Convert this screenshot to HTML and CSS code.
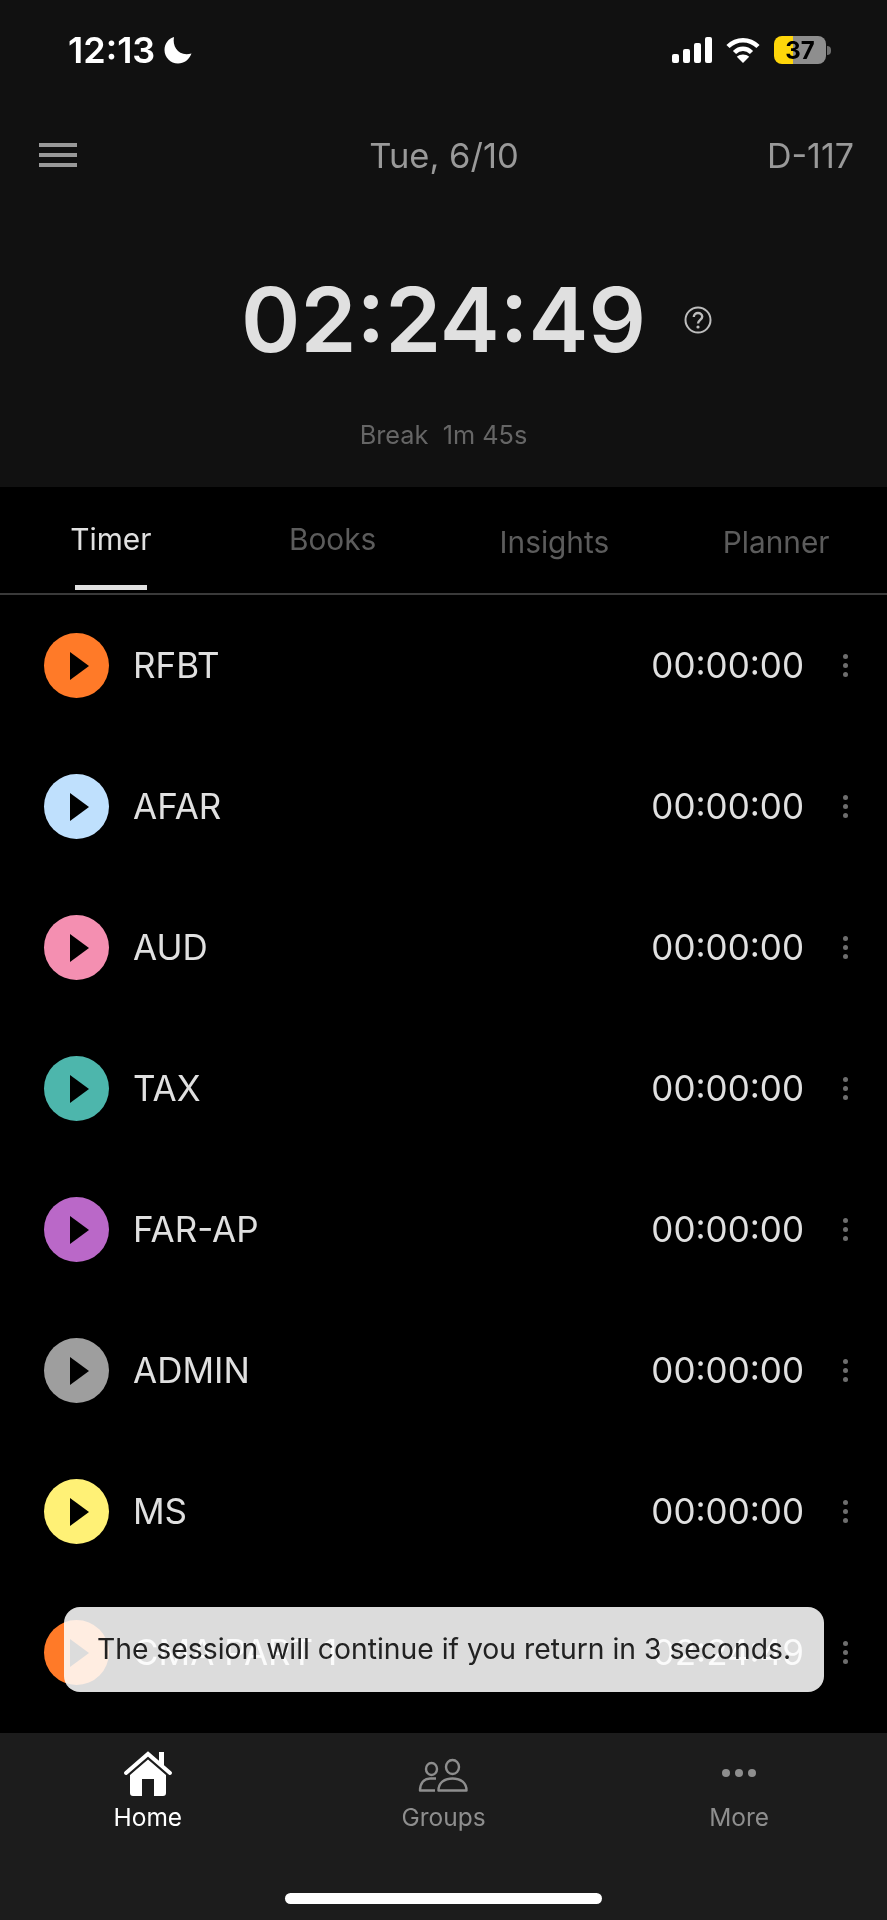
FILE: index.html
```html
<!DOCTYPE html>

<html>

<head>
  <meta charset="utf-8">
  <link rel="stylesheet" href="styles.css">
</head>

<body>

  <div class="app">

    <section class="top">
      <div class="status">
        <div class="status-left">
          <span class="status-time">12:13</span>
          <svg class="moon" width="28" height="28" viewBox="0 0 28 28"><path fill="#fff" d="M10 1C8 11 15 21 27.500 17.500C25 24 20 27.500 14 27.500C6.500 27.500 0.500 21.500 0.500 14C0.500 7.500 4.500 2.500 10 1Z"/></svg>
        </div>
        <div class="status-right">
          <svg width="40" height="26" viewBox="0 0 40 26"><rect x="0" y="17" width="7" height="9" rx="2" fill="#fff"/><rect x="11" y="12" width="7" height="14" rx="2" fill="#fff"/><rect x="22" y="6" width="7" height="20" rx="2" fill="#fff"/><rect x="33" y="0" width="7" height="26" rx="2" fill="#fff"/></svg>
          <svg class="wifi" width="34" height="26" viewBox="0 0 34 26"><path fill="none" stroke="#fff" stroke-width="4.500" d="M2 9.500C10.500 1 23.500 1 32 9.500"/><path fill="none" stroke="#fff" stroke-width="4.500" d="M8.500 15.500C13.500 10.500 20.500 10.500 25.500 15.500"/><path fill="#fff" d="M17 26L10.800 19.800C14.500 16.600 19.500 16.600 23.200 19.800Z"/></svg>
          <div class="battery">
            <div class="battery-body"><span class="battery-level">37</span></div>
            <div class="battery-nub"></div>
          </div>
        </div>
      </div>

      <div class="header">
        <div class="menu"><span></span><span></span><span></span></div>
        <div class="date">Tue, 6/10</div>
        <div class="dday">D-117</div>
      </div>

      <div class="clock">
        <div class="clock-time">02:24:49</div>
        <svg class="help" width="28" height="28" viewBox="0 0 28 28"><circle cx="14" cy="14" r="12.500" fill="none" stroke="#bdbdbd" stroke-width="2"/><path fill="none" stroke="#bdbdbd" stroke-width="2.400" d="M9.800 11C9.800 8.600 11.700 7 14 7C16.400 7 18.200 8.600 18.200 10.800C18.200 13.800 14 14 14 17.500"/><circle cx="14" cy="21" r="1.600" fill="#bdbdbd"/></svg>
      </div>

      <div class="break">Break&nbsp; 1m 45s</div>
    </section>

    <nav class="tabs">
      <div class="tab tab-active">Timer</div>
      <div class="tab">Books</div>
      <div class="tab tab-low">Insights</div>
      <div class="tab tab-low">Planner</div>
    </nav>

    <div class="list">
      <div class="row">
        <div class="play orange"><svg width="19" height="28" viewBox="0 0 19 28"><path d="M0 0L19 14L0 28Z"/></svg></div>
        <div class="name">RFBT</div>
        <div class="time">00:00:00</div>
        <div class="more"><i></i><i></i><i></i></div>
      </div>
      <div class="row">
        <div class="play blue"><svg width="19" height="28" viewBox="0 0 19 28"><path d="M0 0L19 14L0 28Z"/></svg></div>
        <div class="name">AFAR</div>
        <div class="time">00:00:00</div>
        <div class="more"><i></i><i></i><i></i></div>
      </div>
      <div class="row">
        <div class="play pink"><svg width="19" height="28" viewBox="0 0 19 28"><path d="M0 0L19 14L0 28Z"/></svg></div>
        <div class="name">AUD</div>
        <div class="time">00:00:00</div>
        <div class="more"><i></i><i></i><i></i></div>
      </div>
      <div class="row">
        <div class="play teal"><svg width="19" height="28" viewBox="0 0 19 28"><path d="M0 0L19 14L0 28Z"/></svg></div>
        <div class="name">TAX</div>
        <div class="time">00:00:00</div>
        <div class="more"><i></i><i></i><i></i></div>
      </div>
      <div class="row">
        <div class="play purple"><svg width="19" height="28" viewBox="0 0 19 28"><path d="M0 0L19 14L0 28Z"/></svg></div>
        <div class="name">FAR-AP</div>
        <div class="time">00:00:00</div>
        <div class="more"><i></i><i></i><i></i></div>
      </div>
      <div class="row">
        <div class="play grey"><svg width="19" height="28" viewBox="0 0 19 28"><path d="M0 0L19 14L0 28Z"/></svg></div>
        <div class="name">ADMIN</div>
        <div class="time">00:00:00</div>
        <div class="more"><i></i><i></i><i></i></div>
      </div>
      <div class="row">
        <div class="play yellow"><svg width="19" height="28" viewBox="0 0 19 28"><path d="M0 0L19 14L0 28Z"/></svg></div>
        <div class="name">MS</div>
        <div class="time">00:00:00</div>
        <div class="more"><i></i><i></i><i></i></div>
      </div>
      <div class="row">
        <div class="play orange"><svg width="19" height="28" viewBox="0 0 19 28"><path d="M0 0L19 14L0 28Z"/></svg></div>
        <div class="name">CMA PART 1</div>
        <div class="time">02:24:49</div>
        <div class="more"><i></i><i></i><i></i></div>
      </div>
    </div>

    <!-- Lies over the last row, the grey layer is screened on what is under it. -->
    <div class="toast"><span class="toast-text">The session will continue if you return in 3 seconds.</span></div>

    <footer class="bottom">
      <div class="bottom-tabs">
        <div class="bottom-tab bottom-active">
          <svg width="50" height="46" viewBox="0 0 50 46"><path fill="none" stroke="#fff" stroke-width="4" stroke-linecap="round" d="M3 22L25 3L47 22"/><rect x="36" y="1" width="5" height="13" fill="#fff"/><path fill="#fff" d="M25 8.500L43 24V42C43 44 42 45 40 45H31V28H19V45H10C8 45 7 44 7 42V24Z"/></svg>
          <span>Home</span>
        </div>
        <div class="bottom-tab">
          <svg width="50" height="46" viewBox="0 0 50 46"><g fill="none" stroke="#8e8e8e" stroke-width="2.400" stroke-linejoin="round"><ellipse cx="13.500" cy="18" rx="5.500" ry="6"/><ellipse cx="34.500" cy="16" rx="6.500" ry="7"/><path d="M18 27.500H12C6 27.500 2 32 2 39.500H17"/><path d="M20.500 39.500C20.500 32 26 27.500 34.500 27.500C43 27.500 48.500 32 48.500 39.500Z"/></g></svg>
          <span>Groups</span>
        </div>
        <div class="bottom-tab">
          <svg width="50" height="46" viewBox="0 0 50 46"><circle cx="12" cy="22" r="4" fill="#8e8e8e"/><circle cx="25" cy="22" r="4" fill="#8e8e8e"/><circle cx="38" cy="22" r="4" fill="#8e8e8e"/></svg>
          <span>More</span>
        </div>
      </div>
      <div class="home-bar"></div>
    </footer>

  </div>

</body>

</html>
```

FILE: styles.css
```css
html,
body {
  margin: 0;
  background: #000;
}

.app {
  position: relative;
  width: 887px;
  height: 1920px;
  display: flex;
  flex-direction: column;
  overflow: hidden;
  background: #000;
  font-family: Inter, "Liberation Sans", sans-serif;
}

/* Dark block at the top: status bar, date row, big clock */
.top {
  height: 487px;
  background: #111;
  display: flex;
  flex-direction: column;
}

.status {
  height: 100px;
  padding: 0 56px 0 68px;
  display: flex;
  justify-content: space-between;
  align-items: center;
}

.status-left,
.status-right {
  display: flex;
  align-items: center;
}

.status-time {
  color: #fff;
  font-size: 36px;
  font-weight: 600;
}

.moon {
  margin-left: 9px;
}

.wifi {
  margin-left: 14px;
}

.battery {
  margin-left: 14px;
  display: flex;
  align-items: center;
}

.battery-body {
  width: 52px;
  height: 28px;
  border-radius: 8px;
  background: linear-gradient(to right, #ffd60a 19px, #8e8e8e 19px);
  display: flex;
  align-items: center;
  justify-content: center;
}

.battery-level {
  color: #000;
  font-size: 24px;
  font-weight: 700;
}

.battery-nub {
  width: 4px;
  height: 9px;
  margin-left: 1px;
  border-radius: 0 4px 4px 0;
  background: #6e6e6e;
}

.header {
  height: 110px;
  padding: 0 33px 0 39px;
  display: grid;
  grid-template-columns: 1fr auto 1fr;
  align-items: center;
}

.menu {
  display: flex;
  flex-direction: column;
  gap: 6px;
  width: 38px;
}

.menu span {
  height: 4px;
  background: #999;
}

.date,
.dday {
  color: #999;
  font-size: 34px;
}

.date {
  margin-right: 5px;
  font-size: 34.500px;
}

.dday {
  text-align: right;
}

.clock {
  margin-top: 62px;
  height: 96px;
  display: grid;
  grid-template-columns: 1fr auto 1fr;
  align-items: center;
}

.clock-time {
  grid-column: 2;
  color: #e0e0e0;
  font-size: 90px;
  font-weight: 600;
  line-height: 96px;
}

.help {
  margin-left: 38px;
}

.break {
  margin-top: 51px;
  text-align: center;
  color: #666;
  font-size: 25.300px;
}

/* Tabs */
.tabs {
  height: 106px;
  display: grid;
  grid-template-columns: repeat(4, 1fr);
  border-bottom: 2px solid #3a3a3a;
}

.tab {
  position: relative;
  padding-top: 34px;
  text-align: center;
  color: #5c5c5c;
  font-size: 29.800px;
}

.tab-low {
  padding-top: 37px;
}

.tab-active {
  color: #e0e0e0;
}

.tab-active:after {
  content: "";
  position: absolute;
  left: 75px;
  bottom: 3px;
  width: 72px;
  height: 5px;
  background: #e0e0e0;
}

/* Subject rows */
.row {
  height: 141px;
  padding: 0 39px 0 44px;
  display: flex;
  align-items: center;
}

.play {
  width: 65px;
  height: 65px;
  border-radius: 50%;
  display: flex;
  align-items: center;
  justify-content: center;
}

.play svg {
  margin-left: 6px;
}

.orange {
  background: #ff7a28;
}

.blue {
  background: #bfe0fd;
}

.pink {
  background: #f48fb1;
}

.teal {
  background: #4db6ac;
}

.purple {
  background: #ba68c8;
}

.grey {
  background: #9e9e9e;
}

.yellow {
  background: #fff176;
}

.name {
  flex: 1;
  margin-left: 24px;
  padding-bottom: 2px;
  color: #e0e0e0;
  font-size: 35px;
}

.time {
  padding-bottom: 2px;
  color: #e0e0e0;
  font-size: 35px;
}

.more {
  margin-left: 39px;
  display: flex;
  flex-direction: column;
  gap: 4px;
}

.more i {
  display: block;
  width: 5px;
  height: 5px;
  border-radius: 50%;
  background: #6e6e6e;
}

.toast {
  position: absolute;
  left: 64px;
  top: 1607px;
  width: 760px;
  height: 85px;
  display: flex;
  align-items: center;
  justify-content: center;
}

.toast:before {
  content: "";
  position: absolute;
  inset: 0;
  border-radius: 16px;
  background: #dcdcdc;
  mix-blend-mode: screen;
}

.toast-text {
  position: relative;
  padding-bottom: 2px;
  color: #222;
  font-size: 28.300px;
  white-space: nowrap;
}

/* Bottom navigation */
.bottom {
  margin-top: auto;
  height: 187px;
  background: #1c1c1c;
  display: flex;
  flex-direction: column;
}

.bottom-tabs {
  padding-top: 18px;
  display: grid;
  grid-template-columns: repeat(3, 1fr);
}

.bottom-tab {
  display: flex;
  flex-direction: column;
  align-items: center;
  color: #8e8e8e;
  font-size: 24.500px;
}

.bottom-tab span {
  margin-top: 5px;
}

.bottom-active {
  color: #fff;
}

.home-bar {
  width: 317px;
  height: 11px;
  margin: auto auto 16px;
  border-radius: 6px;
  background: #fff;
}
```
